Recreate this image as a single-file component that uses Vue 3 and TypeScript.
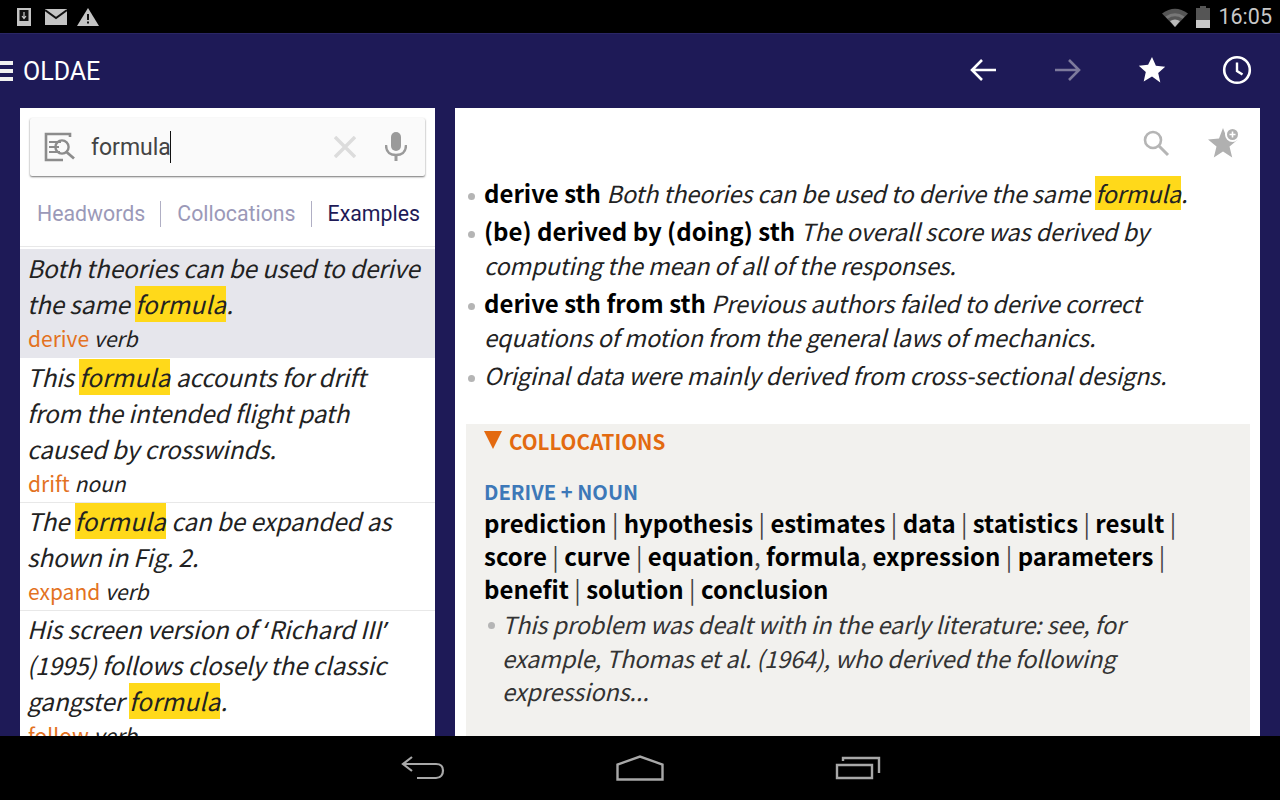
<template>
  <div class="screen">
    <div class="status">
      <div class="status-left">
        <svg width="16" height="20" viewBox="0 0 16 20"><rect x="1" y="1" width="14" height="18" fill="#c4c4c4"/><rect x="3.500" y="3" width="9" height="11" fill="#111"/><path d="M8 5v6M6 9l2 2.500L10 9" stroke="#ccc" stroke-width="1.200" fill="none"/></svg>
        <svg width="22" height="16" viewBox="0 0 22 16"><path d="M0 0h22v16H0z" fill="#c4c4c4"/><path d="M0 1l11 8 11-8" stroke="#111" stroke-width="2" fill="none"/></svg>
        <svg class="warn" width="22" height="18" viewBox="0 0 22 18"><path d="M11 0l11 18H0z" fill="#c4c4c4"/><path d="M10 6h2v6h-2zM10 13.500h2v2h-2z" fill="#111"/></svg>
      </div>
      <div class="status-right">
        <svg width="26" height="20" viewBox="0 0 26 20"><path d="M0 6.500Q13-3 26 6.500L13 20z" fill="#555"/><path d="M3.500 9.500Q13 3 22.500 9.500l-2 2.200Q13 7 5.500 11.700z" fill="#777"/><path d="M8 14Q13 11 18 14l-5 6z" fill="#bbb"/></svg>
        <svg width="14" height="22" viewBox="0 0 14 22"><path d="M4 0h6v2h4v20H0V2h4z" fill="#555"/><rect y="14" width="14" height="8" fill="#c8c8c8"/></svg>
        <span class="clock">16:05</span>
      </div>
    </div>

    <header class="toolbar">
      <div class="brand">
        <span class="burger"><i></i><i></i><i></i></span>
        <span>OLDAE</span>
      </div>
      <div class="actions">
        <svg width="28" height="26" viewBox="0 0 28 26"><path d="M26 13H2M12 3L2 13l10 10" stroke="#fff" stroke-width="2.600" fill="none"/></svg>
        <svg width="28" height="26" viewBox="0 0 28 26"><path d="M1 13h24M15 3l10 10-10 10" stroke="#7d7a9c" stroke-width="2.600" fill="none"/></svg>
        <svg width="28" height="28" viewBox="0 0 28 28"><path d="M14 1l3.900 8.800 9.300.9-7 6.300 2.100 9.500L14 20.600l-8.300 4.900 2.100-9.500-7-6.300 9.300-.9z" fill="#fff"/></svg>
        <svg width="30" height="30" viewBox="0 0 30 30"><circle cx="15" cy="15" r="12.800" stroke="#fff" stroke-width="2.600" fill="none"/><path d="M15 7.500V16l5.500 3.500" stroke="#fff" stroke-width="2.400" fill="none"/></svg>
      </div>
    </header>

    <main class="content">
      <aside class="left">
        <div class="search">
          <svg class="search-icon" width="32" height="30" viewBox="0 0 32 30"><path d="M26 5V2H2v26h17" stroke="#8c8c8c" stroke-width="2.600" fill="none"/><path d="M5 10h12M5 15h10M5 20h11" stroke="#8c8c8c" stroke-width="2" fill="none"/><circle cx="18" cy="15" r="6.600" stroke="#8c8c8c" stroke-width="2.400" fill="none"/><path d="M22.500 20l7.500 6.500" stroke="#8c8c8c" stroke-width="2.800"/></svg>
          <span class="query">formula<i class="caret"></i></span>
          <svg class="clear" width="22" height="22" viewBox="0 0 22 22"><path d="M1 1l20 20M21 1L1 21" stroke="#dcdcdc" stroke-width="3.500" fill="none"/></svg>
          <svg class="mic" width="22" height="30" viewBox="0 0 22 30"><rect x="6" y="0" width="10" height="19" rx="5" fill="#9a9a9a"/><path d="M1 13c0 7 4 10 10 10s10-3 10-10" stroke="#9a9a9a" stroke-width="2.400" fill="none"/><rect x="9.500" y="22" width="3" height="7" fill="#9a9a9a"/></svg>
        </div>
        <nav class="tabs">
          <span class="tab">Headwords</span>
          <span class="tab">Collocations</span>
          <span class="tab active">Examples</span>
        </nav>
        <ul class="results">
          <li v-for="(r, i) in results" :key="i" :class="{ selected: i === 0 }">
            <p class="sentence"><template v-for="(part, j) in r.parts" :key="j"><mark v-if="part === 'formula'">formula</mark><span v-else-if="part === '‘' || part === '’'" class="latin">{{ part }}</span><template v-else>{{ part }}</template></template></p>
            <p class="source"><span class="word">{{ r.word }}</span> <em>{{ r.pos }}</em></p>
          </li>
        </ul>
      </aside>

      <section class="right">
        <div class="tools">
          <svg width="28" height="28" viewBox="0 0 28 28"><circle cx="11" cy="11" r="8" stroke="#b5b5b5" stroke-width="2.600" fill="none"/><path d="M17 17l9 9" stroke="#b5b5b5" stroke-width="3"/></svg>
          <svg width="32" height="32" viewBox="0 0 32 32"><path d="M15 1l4 10.500 11 .9-8.500 7.100 2.700 10.900L15 24.500l-9.200 5.900 2.700-10.900L0 12.400l11-.9z" fill="#b0b0b0"/><circle cx="24.500" cy="7.500" r="7.500" fill="#fff"/><circle cx="24.500" cy="7.500" r="5.500" fill="#b0b0b0"/><path d="M24.500 4.500v6M21.500 7.500h6" stroke="#fff" stroke-width="1.600"/></svg>
        </div>
        <ul class="senses">
          <li><b>derive sth</b> <em>Both theories can be used to derive the same <mark>formula</mark>.</em></li>
          <li><b>(be) derived by (doing) sth</b> <em>The overall score was derived by computing the mean of all of the responses.</em></li>
          <li><b>derive sth from sth</b> <em>Previous authors failed to derive correct equations of motion from the general laws of mechanics.</em></li>
          <li><em>Original data were mainly derived from cross-sectional designs.</em></li>
        </ul>
        <div class="colloc">
          <h3 class="colloc-title"><i class="tri"></i>COLLOCATIONS</h3>
          <h4 class="colloc-sub">DERIVE + NOUN</h4>
          <p class="colloc-words"><template v-for="(w, i) in words" :key="i"><b>{{ w.text }}</b>{{ w.sep }}</template></p>
          <p class="colloc-ex"><em>This problem was dealt with in the early literature: see, for example, Thomas et al. (1964), who derived the following expressions...</em></p>
        </div>
      </section>
    </main>

    <footer class="navbar">
      <svg width="44" height="26" viewBox="0 0 44 26"><path d="M11 2L2 9l9 7M2 9h33c5 0 7 3 7 6.500S40 23 35 23H16" stroke="#a8a8a8" stroke-width="2.200" fill="none"/></svg>
      <svg width="48" height="26" viewBox="0 0 48 26"><path d="M1.500 24.500V9.500L24 1.500l22.500 8v15z" stroke="#a8a8a8" stroke-width="2.400" fill="none"/></svg>
      <svg width="46" height="24" viewBox="0 0 46 24"><path d="M2 9h35v13H2z" stroke="#a8a8a8" stroke-width="2.400" fill="none"/><path d="M8 5V2h36v15" stroke="#a8a8a8" stroke-width="2.400" fill="none"/></svg>
    </footer>
  </div>
</template>

<script setup lang="ts">
interface Result {
  parts: string[]
  word: string
  pos: string
}

const results: Result[] = [
  { parts: ['Both theories can be used to derive\nthe same ', 'formula', '.'], word: 'derive', pos: 'verb' },
  { parts: ['This ', 'formula', ' accounts for drift\nfrom the intended flight path\ncaused by crosswinds.'], word: 'drift', pos: 'noun' },
  { parts: ['The ', 'formula', ' can be expanded as\nshown in Fig. 2.'], word: 'expand', pos: 'verb' },
  { parts: ['His screen version of ', '‘', 'Richard III', '’', '\n(1995) follows closely the classic\ngangster ', 'formula', '.'], word: 'follow', pos: 'verb' },
]

const words = [
  { text: 'prediction', sep: '\u00a0| ' },
  { text: 'hypothesis', sep: '\u00a0| ' },
  { text: 'estimates', sep: '\u00a0| ' },
  { text: 'data', sep: '\u00a0| ' },
  { text: 'statistics', sep: '\u00a0| ' },
  { text: 'result', sep: '\u00a0| ' },
  { text: 'score', sep: '\u00a0| ' },
  { text: 'curve', sep: '\u00a0| ' },
  { text: 'equation', sep: ', ' },
  { text: 'formula', sep: ', ' },
  { text: 'expression', sep: '\u00a0| ' },
  { text: 'parameters', sep: '\u00a0| ' },
  { text: 'benefit', sep: '\u00a0| ' },
  { text: 'solution', sep: '\u00a0| ' },
  { text: 'conclusion', sep: '' },
]
</script>

<style scoped>
.screen {
  width: 1280px;
  height: 800px;
  display: flex;
  flex-direction: column;
  overflow: hidden;
  background: #1e1a57;
  font-family: "Noto Sans CJK SC", "Noto Sans", sans-serif;
}
.status {
  height: 33px;
  flex: none;
  background: #000;
  display: flex;
  align-items: center;
  justify-content: space-between;
  padding: 0 8px 0 16px;
}
.status-left, .status-right {
  display: flex;
  align-items: center;
}
.status-left { gap: 13px; }
.status-left .warn { margin-left: -3px; }
.status-right { gap: 8px; }
.clock {
  font: 21.500px Roboto, sans-serif;
  color: #c8c8c8;
}
.toolbar {
  height: 75px;
  flex: none;
  display: flex;
  align-items: center;
  justify-content: space-between;
  padding: 0 28px 2px 0;
  border-top: 1px solid #2a2665;
  box-sizing: border-box;
}
.brand {
  display: flex;
  align-items: center;
  gap: 10px;
  color: #fff;
  font: 25px Roboto, sans-serif;
  margin-top: 2px;
}
.burger {
  width: 13px;
  display: flex;
  flex-direction: column;
  gap: 4px;
}
.burger i {
  height: 4px;
  background: #f0f0f0;
}
.actions {
  display: flex;
  align-items: center;
  gap: 56px;
}
.content {
  flex: 1;
  min-height: 0;
  display: flex;
  gap: 20px;
  padding: 0 20px;
}
.left {
  width: 415px;
  flex: none;
  background: #fff;
  overflow: hidden;
}
.search {
  margin: 10px 10px 0;
  height: 58px;
  box-sizing: border-box;
  background: #fafafa;
  border-radius: 2px;
  box-shadow: 0 1px 2px rgba(0, 0, 0, .55);
  display: flex;
  align-items: center;
  padding: 0 18px 0 14px;
}
.query {
  flex: 1;
  margin-left: 15px;
  font: 23px Roboto, sans-serif;
  color: #444;
  display: flex;
  align-items: center;
}
.caret {
  width: 1px;
  height: 32px;
  background: #111;
  margin-left: -1px;
}
.clear { margin-right: 29px; }
.tabs {
  display: flex;
  align-items: center;
  height: 40px;
  margin-top: 18px;
  padding: 0 0 0 17px;
}
.tab {
  font: 21.300px Roboto, sans-serif;
  color: #9b99b8;
  height: 26px;
  line-height: 26px;
  white-space: nowrap;
  padding-right: 15px;
  margin-right: 16px;
  border-right: 1px solid #b0afc4;
}
.tab.active {
  color: #1e1a57;
  border-right: 0;
  padding-right: 0;
  margin-right: 0;
}
.results {
  list-style: none;
  margin: 12px 0 0;
  padding: 2px 0 0;
  border-top: 1px solid #e8e8e8;
}
.results li {
  padding: 0 8px 3px;
  border-bottom: 1px solid #e8e8e8;
}
.results li.selected {
  background: #e6e6ec;
  padding: 1px 8px 4px;
  border-bottom-color: #fff;
}
.sentence {
  margin: 0 0 0 -1px;
  font-size: 24.300px;
  letter-spacing: -.15px;
  font-style: italic;
  line-height: 36px;
  color: #222;
  white-space: pre-line;
}
.sentence mark { letter-spacing: .25px; }
.source {
  margin: 0;
  font-size: 21px;
  line-height: 32px;
  color: #222;
}
.word { color: #e3721f; }
.latin {
  font-family: "Noto Sans", sans-serif;
  line-height: 1;
  padding: 0 1.500px;
}
mark {
  background: #ffd91a;
  color: inherit;
  display: inline-block;
}
.right {
  flex: 1;
  min-width: 0;
  background: #fff;
  overflow: hidden;
}
.tools {
  height: 68px;
  display: flex;
  justify-content: flex-end;
  align-items: center;
  gap: 38px;
  padding: 1px 20px 0 0;
  box-sizing: border-box;
}
.senses {
  margin: 0;
  padding: 0 16px 0 29px;
  list-style: none;
}
.senses li {
  font-size: 24px;
  line-height: 34px;
  margin-bottom: 4px;
  color: #222;
  position: relative;
}
.senses em {
  font-size: 23.500px;
  letter-spacing: -.15px;
}
.senses li::before {
  content: "";
  position: absolute;
  left: -16px;
  top: 17px;
  width: 7px;
  height: 7px;
  border-radius: 50%;
  background: #b5b5b5;
}
.senses b { color: #000; }
.colloc {
  margin: 32px 10px 0 11px;
  background: #f2f1ee;
  padding: 0 19px 40px 18px;
  height: 400px;
}
.colloc-title {
  margin: 0;
  padding-top: 3px;
  display: flex;
  align-items: center;
  gap: 7px;
  font-size: 20.600px;
  line-height: 28px;
  color: #e36a10;
}
.tri {
  width: 0;
  height: 0;
  border-left: 9px solid transparent;
  border-right: 9px solid transparent;
  border-top: 18px solid #e36a10;
  margin-top: -2px;
}
.colloc-sub {
  margin: 23px 0 0;
  font-size: 20.200px;
  line-height: 28px;
  color: #3d78b8;
}
.colloc-words {
  margin: 0;
  font-size: 24px;
  line-height: 33px;
  color: #444;
}
.colloc-words b { color: #000; }
.colloc-ex {
  margin: 3px 0 0;
  padding: 0 60px 0 18px;
  font-size: 23.500px;
  letter-spacing: -.15px;
  line-height: 33.500px;
  color: #333;
  position: relative;
}
.colloc-ex::before {
  content: "";
  position: absolute;
  left: 4px;
  top: 14px;
  width: 7px;
  height: 7px;
  border-radius: 50%;
  background: #b5b5b5;
}
.navbar {
  height: 64px;
  flex: none;
  background: #000;
  display: flex;
  align-items: center;
  justify-content: center;
  gap: 171px;
  padding-left: 2px;
}
</style>

<style>
html, body { margin: 0; background: #000; }
</style>
